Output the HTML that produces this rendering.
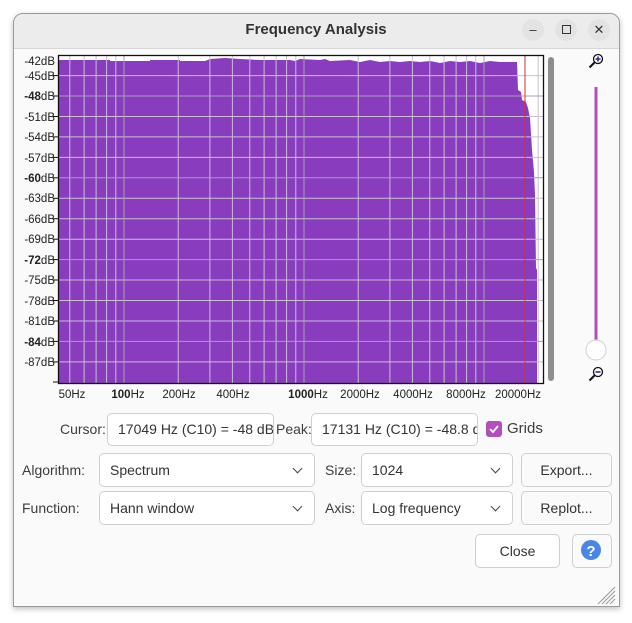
<!DOCTYPE html>
<html><head><meta charset="utf-8"><style>
*{box-sizing:border-box;margin:0;padding:0}
body{width:632px;height:623px;background:#fff;font-family:"Liberation Sans",sans-serif;position:relative;overflow:hidden;color:#3d3d3d}
.win{position:absolute;left:13px;top:13px;width:607px;height:594px;background:#fafafa;border:1px solid #9a9a9a;border-radius:10px 10px 0 0;box-shadow:0 2px 6px rgba(0,0,0,.25)}
.tb{position:absolute;left:0;top:0;width:605px;height:35px;background:#ececec;border-bottom:1px solid #d6d6d6;border-radius:10px 10px 0 0}
.title{position:absolute;left:0;width:632px;top:21px;text-align:center;font-size:15px;font-weight:bold;color:#333}
.tbtn{position:absolute;top:19px;width:22px;height:22px;border-radius:50%;background:#e3e3e3;text-align:center;line-height:22px;font-size:13px;color:#333}
.a{position:absolute;font-size:14px;color:#3d3d3d;white-space:nowrap;line-height:16px}
.box{position:absolute;background:#fff;border:1px solid #cfcfcf;border-radius:5px;font-size:14px;color:#333;padding-left:10px;white-space:nowrap;overflow:hidden}
.btn{position:absolute;background:#fafafa;border:1px solid #cfcfcf;border-radius:5px;font-size:14px;color:#333;text-align:center}
.chev{position:absolute;right:13px;top:11px;width:7px;height:7px;border-right:1.3px solid #444;border-bottom:1.3px solid #444;transform:rotate(45deg)}
</style></head><body>
<div class="win"><div class="tb"></div></div>
<div class="title">Frequency Analysis</div>
<div class="tbtn" style="left:522px">–</div>
<div class="tbtn" style="left:555px"><span style="display:inline-block;width:9px;height:9px;border:1.3px solid #333;margin-top:6px"></span></div>
<div class="tbtn" style="left:588px">✕</div>

<svg style="position:absolute;left:0;top:0" width="632" height="623">
<g font-family="Liberation Sans,sans-serif" font-size="11.5" fill="#222" text-anchor="end">
<text x="55" y="65">-42dB</text><text x="55" y="80">-45dB</text><text x="55" y="100"><tspan font-weight="bold">-48</tspan>dB</text>
<text x="55" y="121">-51dB</text><text x="55" y="141">-54dB</text><text x="55" y="162">-57dB</text>
<text x="55" y="182"><tspan font-weight="bold">-60</tspan>dB</text><text x="55" y="202">-63dB</text><text x="55" y="223">-66dB</text>
<text x="55" y="243">-69dB</text><text x="55" y="264"><tspan font-weight="bold">-72</tspan>dB</text><text x="55" y="284">-75dB</text>
<text x="55" y="305">-78dB</text><text x="55" y="325">-81dB</text><text x="55" y="346"><tspan font-weight="bold">-84</tspan>dB</text><text x="55" y="366">-87dB</text>
</g>
<rect x="58" y="55" width="485" height="328" fill="#fff"/>
<path d="M58,383 L58,60 L110,60 L110,61 L150,61 L150,60 L180,60 L180,61 L205,61 L210,59 L225,58 L240,59 L260,60 L290,60 L295,61 L300,59 L320,60 L325,59 L330,61 L350,60 L360,62 L370,60 L380,62 L390,61 L400,62 L410,61 L420,62 L430,61 L440,63 L450,61 L460,62 L470,61 L480,63 L490,61 L500,62 L510,62 L517,62 L518,90 L521,92 L522,100 L526,102 L528,108 L530,118 L532,150 L534,172 L535,195 L536,268 L537,270 L537,383 Z" fill="#8a3cbf"/>
<g stroke="#c8c0d0" stroke-width="1">
<line x1="58" x2="543" y1="75.6" y2="75.6"/><line x1="58" x2="543" y1="116.5" y2="116.5"/><line x1="58" x2="543" y1="136.9" y2="136.9"/><line x1="58" x2="543" y1="157.4" y2="157.4"/><line x1="58" x2="543" y1="198.3" y2="198.3"/><line x1="58" x2="543" y1="218.7" y2="218.7"/><line x1="58" x2="543" y1="239.2" y2="239.2"/><line x1="58" x2="543" y1="280" y2="280"/><line x1="58" x2="543" y1="300.5" y2="300.5"/><line x1="58" x2="543" y1="321" y2="321"/><line x1="58" x2="543" y1="361.9" y2="361.9"/>
<line y1="55" y2="383" x1="69.8" x2="69.8"/><line y1="55" y2="383" x1="84.1" x2="84.1"/><line y1="55" y2="383" x1="96.1" x2="96.1"/><line y1="55" y2="383" x1="106.6" x2="106.6"/><line y1="55" y2="383" x1="115.8" x2="115.8"/>
<line y1="55" y2="383" x1="178.2" x2="178.2"/><line y1="55" y2="383" x1="209.9" x2="209.9"/><line y1="55" y2="383" x1="232.4" x2="232.4"/><line y1="55" y2="383" x1="249.8" x2="249.8"/><line y1="55" y2="383" x1="264.1" x2="264.1"/><line y1="55" y2="383" x1="276.1" x2="276.1"/><line y1="55" y2="383" x1="286.6" x2="286.6"/><line y1="55" y2="383" x1="295.8" x2="295.8"/>
<line y1="55" y2="383" x1="358.2" x2="358.2"/><line y1="55" y2="383" x1="389.9" x2="389.9"/><line y1="55" y2="383" x1="412.4" x2="412.4"/><line y1="55" y2="383" x1="429.8" x2="429.8"/><line y1="55" y2="383" x1="444.1" x2="444.1"/><line y1="55" y2="383" x1="456.1" x2="456.1"/><line y1="55" y2="383" x1="466.6" x2="466.6"/><line y1="55" y2="383" x1="475.8" x2="475.8"/>
<line y1="55" y2="383" x1="538.2" x2="538.2"/>
</g>
<g stroke="#a8a0b0" stroke-width="1">
<line x1="58" x2="543" y1="96" y2="96"/><line x1="58" x2="543" y1="177.8" y2="177.8"/><line x1="58" x2="543" y1="259.6" y2="259.6"/><line x1="58" x2="543" y1="341.4" y2="341.4"/>
<line y1="55" y2="383" x1="124" x2="124"/><line y1="55" y2="383" x1="304" x2="304"/><line y1="55" y2="383" x1="484" x2="484"/>
</g>
<line x1="525" x2="525" y1="55" y2="383" stroke="#d0303a" stroke-width="1"/>
<rect x="58.5" y="55.5" width="485" height="328" fill="none" stroke="#111" stroke-width="1.3"/>
<g stroke="#111"><line x1="53" x2="58" y1="75.6" y2="75.6"/><line x1="53" x2="58" y1="96" y2="96"/><line x1="53" x2="58" y1="116.5" y2="116.5"/><line x1="53" x2="58" y1="136.9" y2="136.9"/><line x1="53" x2="58" y1="157.4" y2="157.4"/><line x1="53" x2="58" y1="177.8" y2="177.8"/><line x1="53" x2="58" y1="198.3" y2="198.3"/><line x1="53" x2="58" y1="218.7" y2="218.7"/><line x1="53" x2="58" y1="239.2" y2="239.2"/><line x1="53" x2="58" y1="259.6" y2="259.6"/><line x1="53" x2="58" y1="280" y2="280"/><line x1="53" x2="58" y1="300.5" y2="300.5"/><line x1="53" x2="58" y1="321" y2="321"/><line x1="53" x2="58" y1="341.4" y2="341.4"/><line x1="53" x2="58" y1="361.9" y2="361.9"/><line x1="53" x2="58" y1="382" y2="382"/></g>
<g font-family="Liberation Sans,sans-serif" font-size="11.5" fill="#222" text-anchor="middle">
<text x="72" y="398">50Hz</text><text x="128" y="398"><tspan font-weight="bold">100</tspan>Hz</text><text x="179" y="398">200Hz</text><text x="233" y="398">400Hz</text><text x="308" y="398"><tspan font-weight="bold">1000</tspan>Hz</text><text x="360" y="398">2000Hz</text><text x="413" y="398">4000Hz</text><text x="466" y="398">8000Hz</text><text x="518" y="398">20000Hz</text>
</g>
<rect x="548" y="57" width="6" height="324" rx="3" fill="#8e8e8e"/>
<rect x="594.5" y="87" width="3" height="255" fill="#b24fbd"/>
<circle cx="596" cy="350" r="10" fill="#fff" stroke="#cfcfcf"/>
<g><circle cx="598" cy="59" r="4.5" fill="#fff" stroke="#111" stroke-width="1.3"/><path d="M595.5,59h5M598,56.5v5" stroke="#2a2aa0" stroke-width="1.6"/><line x1="594.5" y1="62.5" x2="589.5" y2="67.5" stroke="#111" stroke-width="2"/></g>
<g><circle cx="598" cy="372" r="4.5" fill="#fff" stroke="#111" stroke-width="1.3"/><path d="M595.5,372h5" stroke="#2a2aa0" stroke-width="1.6"/><line x1="594.5" y1="375.5" x2="589.5" y2="380.5" stroke="#111" stroke-width="2"/></g>
<g stroke="#999" stroke-width="1"><line x1="598" y1="604" x2="615" y2="587"/><line x1="602" y1="604" x2="615" y2="591"/><line x1="606" y1="604" x2="615" y2="595"/><line x1="610" y1="604" x2="615" y2="599"/></g>
<rect x="486" y="421" width="16" height="16" rx="3" fill="#b24fbd"/>
<path d="M490,429l3,3l5,-6" stroke="#fff" stroke-width="1.8" fill="none"/>
<circle cx="591" cy="550" r="10" fill="#4a86e8"/>
<text x="591" y="556" text-anchor="middle" font-family="Liberation Sans,sans-serif" font-weight="bold" font-size="15" fill="#fff">?</text>
</svg>

<div class="a" style="left:60px;top:421px">Cursor:</div>
<div class="box" style="left:107px;top:413px;width:167px;height:33px;line-height:31px">17049 Hz (C10) = -48 dB</div>
<div class="a" style="left:276px;top:421px">Peak:</div>
<div class="box" style="left:311px;top:413px;width:167px;height:33px;line-height:31px">17131 Hz (C10) = -48.8 dB</div>
<div class="a" style="left:507px;top:421px;font-size:15px">Grids</div>

<div class="a" style="left:22px;top:462px">Algorithm:</div>
<div class="box" style="left:99px;top:453px;width:216px;height:34px;line-height:32px">Spectrum<span class="chev"></span></div>
<div class="a" style="left:325px;top:462px">Size:</div>
<div class="box" style="left:361px;top:453px;width:152px;height:34px;line-height:32px">1024<span class="chev"></span></div>
<div class="btn" style="left:521px;top:453px;width:91px;height:34px;line-height:32px">Export...</div>

<div class="a" style="left:22px;top:500px">Function:</div>
<div class="box" style="left:99px;top:491px;width:216px;height:34px;line-height:32px">Hann window<span class="chev"></span></div>
<div class="a" style="left:325px;top:500px">Axis:</div>
<div class="box" style="left:361px;top:491px;width:152px;height:34px;line-height:32px">Log frequency<span class="chev"></span></div>
<div class="btn" style="left:521px;top:491px;width:91px;height:34px;line-height:32px">Replot...</div>

<div class="btn" style="left:475px;top:534px;width:85px;height:34px;line-height:32px;background:#fff">Close</div>
<div class="btn" style="left:572px;top:534px;width:40px;height:34px;background:transparent"></div>
</body></html>
